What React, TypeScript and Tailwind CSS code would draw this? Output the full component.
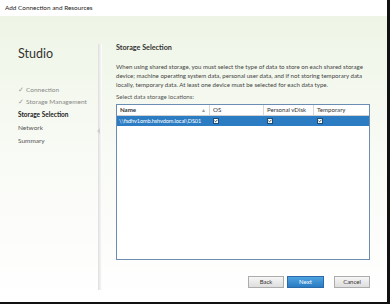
import { Check } from 'lucide-react'

const steps = [
  { label: 'Connection', done: true },
  { label: 'Storage Management', done: true },
  { label: 'Storage Selection', current: true },
  { label: 'Network' },
  { label: 'Summary' },
]

const Box = () => (
  <span className="flex h-[6px] w-[6px] items-center justify-center border border-[#1d4f7a] bg-white">
    <Check className="h-[6px] w-[6px] text-[#10263a]" strokeWidth={5} />
  </span>
)

export default function App() {
  return (
    <div
      className="flex h-[304px] w-[390px] flex-col overflow-hidden border-r-[3px] border-b-[2px] border-[#111] bg-white text-[#333]"
      style={{ fontFamily: 'Lato, "Open Sans", sans-serif' }}
    >
      <div className="flex h-[16px] shrink-0 items-center px-[5px] text-[6.4px] text-[#222]">
        Add Connection and Resources
      </div>

      <div className="flex flex-1 bg-gradient-to-b from-[#eef5e6] via-[#f9fbf6] to-white">
        <div className="flex w-[98px] shrink-0 flex-col pl-[18px] pt-[32px]">
          <div className="text-[12.5px] leading-none text-[#333]">Studio</div>
          <div className="mt-[25px] flex flex-col gap-[4.8px] text-[6.5px] leading-[8px]">
            {steps.map((s) => (
              <div
                key={s.label}
                className={
                  s.current
                    ? 'font-bold text-[#222]'
                    : s.done
                      ? 'text-[#8a8a8a]'
                      : 'text-[#555]'
                }
              >
                {s.done && <span className="mr-[2px] text-[#999]">✓</span>}
                {s.label}
              </div>
            ))}
          </div>
        </div>

        <div className="relative mt-[28px] mb-[12px] w-[4px] shrink-0 bg-gradient-to-r from-[#dedede] via-[#eeeeee] to-white">
          <span className="absolute top-[84px] left-[-1px] h-0 w-0 border-y-[3px] border-r-[3px] border-y-transparent border-r-[#cfcfcf]" />
        </div>

        <div className="flex flex-1 flex-col pl-[14px] pr-[17px] pt-[27px]">
          <div className="text-[7.2px] font-bold text-[#333]">Storage Selection</div>
          <p className="mt-[8px] text-[6.1px] leading-[9px] text-[#444]">
            When using shared storage, you must select the type of data to store on each shared storage
            device; machine operating system data, personal user data, and if not storing temporary data
            locally, temporary data. At least one device must be selected for each data type.
          </p>
          <div className="mt-[3px] text-[6.1px] text-[#555]">Select data storage locations:</div>

          <div className="mt-[3px] h-[156px] border border-[#6b8db3] bg-white">
            <div className="flex h-[11px] border-b border-[#d0d0d0] text-[6.1px] leading-[10px] text-[#333]">
              <div className="flex w-[93px] items-center justify-between border-r border-[#d8d8d8] px-[3px] font-bold">
                Name<span className="text-[5px] font-normal text-[#999]">▲</span>
              </div>
              <div className="w-[54px] border-r border-[#d8d8d8] px-[3px]">OS</div>
              <div className="w-[50px] border-r border-[#d8d8d8] px-[3px]">Personal vDisk</div>
              <div className="flex-1 px-[3px]">Temporary</div>
            </div>
            <div className="flex h-[10px] items-center bg-[#2b7cc3] text-white">
              <div className="w-[93px] overflow-hidden whitespace-nowrap px-[2px] text-[5.6px] tracking-[-0.1px]">
                \\fsdhv1omb.hshvdom.local\DS01
              </div>
              <div className="w-[54px] px-[3px]">
                <Box />
              </div>
              <div className="w-[50px] px-[3px]">
                <Box />
              </div>
              <div className="flex-1 px-[3px]">
                <Box />
              </div>
            </div>
          </div>

          <div className="mt-[16px] flex justify-end gap-[3px] text-[6px]">
            <button className="h-[12px] w-[36px] border border-[#acacac] bg-gradient-to-b from-[#f6f6f6] to-[#dedede] text-[#333]">
              Back
            </button>
            <button className="h-[12px] w-[37px] border border-[#2a6aa8] bg-gradient-to-b from-[#4ea3e0] to-[#2b7cc3] text-white">
              Next
            </button>
            <button className="ml-[7px] h-[12px] w-[36px] border border-[#acacac] bg-gradient-to-b from-[#f6f6f6] to-[#dedede] text-[#333]">
              Cancel
            </button>
          </div>
        </div>
      </div>
    </div>
  )
}
